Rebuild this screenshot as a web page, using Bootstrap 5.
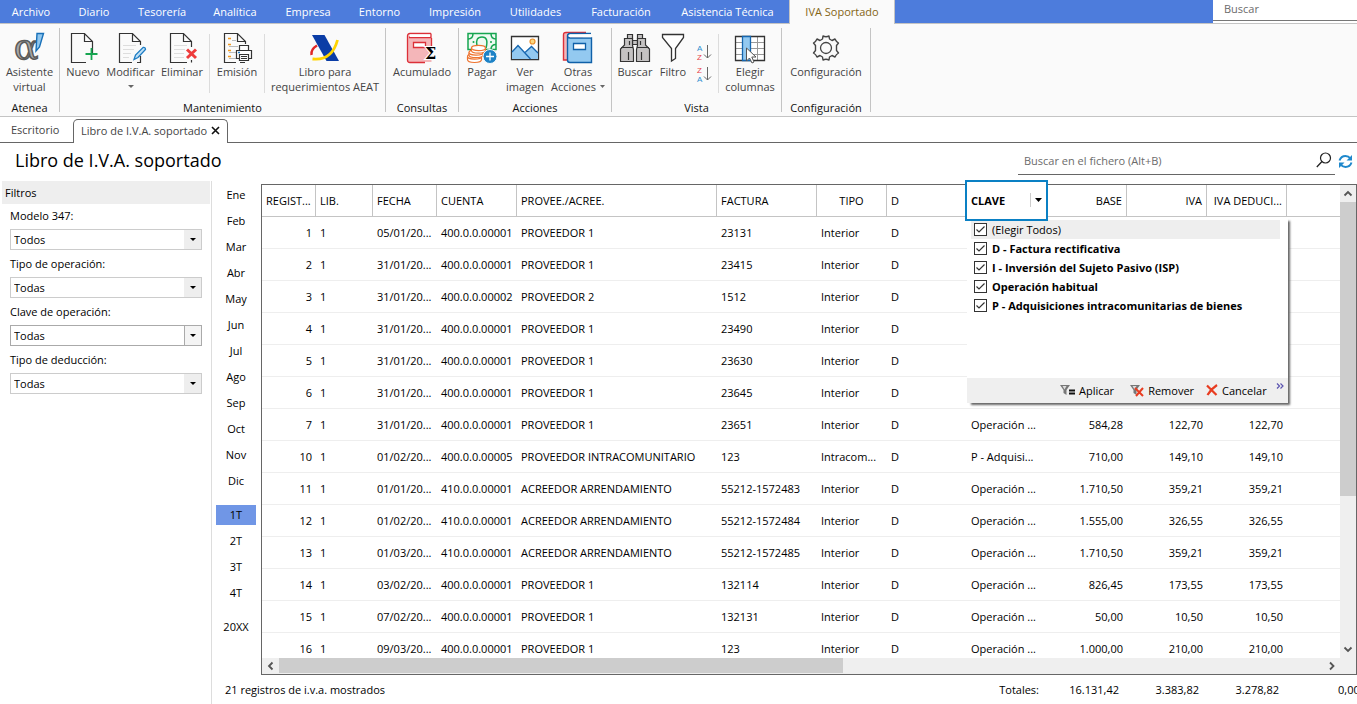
<!DOCTYPE html>
<html lang="es">
<head>
<meta charset="utf-8">
<meta name="viewport" content="width=device-width, initial-scale=1">
<title>Libro de I.V.A. soportado</title>
<link href="https://cdn.jsdelivr.net/npm/bootstrap@5.3.0/dist/css/bootstrap.min.css" rel="stylesheet">
<style>
body { font-family: "Open Sans", "Noto Sans", sans-serif; font-size: 11px; line-height: 15px; color: #000; background: #fff; }
button, input, select { font: inherit; color: inherit; }
svg { display: block; flex: none; }
.plain { background: none; border: 0; padding: 0; }
.fit { min-width: 0; min-height: 0; }
/* top menu */
.topbar { background: #4d7cdc; height: 24px; border-bottom: 1px solid #c4c4c4; }
.menu { display: grid; grid-template-columns: 62px 64px 72px 74px 72px 71px 80px 81px 90px 123px 106px; }
.menu a { color: #fff; text-decoration: none; text-align: center; line-height: 24px; height: 24px; white-space: nowrap; }
.menu a.current { background: #fafafa; color: #846514; border: 1px solid #c4c4c4; border-width: 0 1px; }
.appsearch { width: 144px; height: 21px; border: 0; border-bottom: 1px solid #777; outline: 0; padding: 0 11px 3px; }
.searchslot { background: #fff; height: 23px; }
.appsearch::placeholder, .filesearch input::placeholder { color: #6b6b6b; opacity: 1; }
/* ribbon */
.ribbon { background: #fafafa; height: 93px; border-bottom: 1px solid #c4c4c4; padding-top: 4px; color: #444; }
.rgroup { height: 84px; border-right: 1px solid #c4c4c4; }
.rgroup > h2 { font-size: 11px; line-height: 15px; margin: 0; text-align: center; color: #111; font-weight: 400; }
.rtools { height: 72px; }
.rbtn { display: flex; flex-direction: column; align-items: center; padding-top: 3px; white-space: nowrap; }
.rbtn svg.ico { width: 34px; height: 34px; margin-bottom: -1px; overflow: visible; }
.rsep { width: 1px; height: 59px; margin-top: 6px; background: #dcdcdc; }
.w30 { width: 30px; } .w40 { width: 40px; } .w46 { width: 46px; } .w49 { width: 49px; }
.w54 { width: 54px; } .w59 { width: 59px; } .w62 { width: 62px; } .w66 { width: 66px; } .w72 { width: 72px; }
.w88 { width: 88px; } .w120 { width: 120px; }
.sorter { overflow: visible; font-family: "Liberation Sans", sans-serif; font-size: 8px; }
/* document tabs */
.doctabs { height: 26px; border-bottom: 1px solid #666; color: #444; }
.doctabs a { color: inherit; text-decoration: none; }
.doctabs .closed { width: 73px; padding-left: 11px; }
.doctabs .opened { height: 24px; width: 155px; margin-top: 2px; padding: 0 0 3px 7px; background: #fff; border: 1px solid #666; border-bottom: 0; border-radius: 5px 5px 0 0; white-space: nowrap; }
.pagehead { height: 38px; }
.pagehead h1 { font-size: 18px; line-height: 24px; margin: 0; padding: 5px 0 0 15px; font-weight: 400; }
.filesearch { width: 317px; height: 25px; border-bottom: 1px solid #666; margin: 7px 3px 0 0; padding: 0 3px 4px 6px; }
.filesearch input { border: 0; outline: 0; padding: 0; background: none; }
/* filters */
.side { width: 212px; border-right: 1px solid #ddd; }
.side h2 { font-size: 11px; line-height: 23px; font-weight: 400; background: #eee; margin: 0 1px 4px 2px; padding-left: 3px; }
.field { margin: 0 9px 4px 10px; height: 44px; }
.field label { display: block; line-height: 15px; margin-bottom: 6px; }
.field select { display: block; width: 192px; height: 21px; border: 1px solid #ccc; border-radius: 0; padding: 0 3px; -webkit-appearance: none; appearance: none; background: #fff url("data:image/svg+xml,%3Csvg xmlns='http://www.w3.org/2000/svg' width='17' height='19'%3E%3Cpath fill='%23eee' d='M0 0h17v19H0z'/%3E%3Cpath d='M6 8h6L9 11z'/%3E%3C/svg%3E") no-repeat right center; }
.field select.hot { border-color: #aaa; background-image: url("data:image/svg+xml,%3Csvg xmlns='http://www.w3.org/2000/svg' width='17' height='19'%3E%3Cpath fill='%23f4f4f4' d='M0 0h17v19H0z'/%3E%3Cpath fill='%23aaa' d='M0 0h1v19H0z'/%3E%3Cpath d='M6 8h6L9 11z'/%3E%3C/svg%3E"); }
.periods { width: 49px; padding: 4px 5px 0 4px; gap: 6px; }
.periods button { height: 20px; width: 40px; text-align: center; padding-bottom: 1px; }
.periods .chosen { background: #7096e6; }
/* records grid */
.gridslot { padding-top: 3px; }
.frame { border: 1px solid #666; }
.records { table-layout: fixed; width: 100%; border-collapse: separate; border-spacing: 0; }
.records th, .records td { height: 32px; padding: 0 4px 1px; border-bottom: 1px solid #eee; white-space: nowrap; overflow: hidden; vertical-align: middle; }
.records th { font-weight: 400; border-bottom-color: #c4c4c4; border-right: 1px solid #c4c4c4; }
.records th:last-child { border-right: 0; }
.num { text-align: right; }
.bar { background: #efefef; }
.vbar { width: 16px; } .hbar { height: 16px; }
.thumb { background: #cdcdcd; }
.vbar .thumb { height: 67%; } .hbar .thumb { width: 54%; height: 15px; }
.clavebox { position: absolute; left: 704px; top: -4px; width: 83px; height: 41px; border: 2px solid #0a80c4; background: #fff; padding: 0 4px 1px; z-index: 3; font-weight: 700; }
.clavebox i { width: 1px; height: 14px; background: #ccc; margin-right: 4px; }
.pop { position: absolute; left: 706px; top: 33px; width: 321px; height: 186px; background: #fff; box-shadow: 3px 3px 2px -1px #666; z-index: 2; padding-top: 3px; }
.pop label { display: flex; align-items: center; height: 19px; margin: 0 8px 0 4px; padding-left: 3px; gap: 5px; font-weight: 700; white-space: nowrap; }
.pop label:first-child { background: #eee; font-weight: 400; }
.pop input { -webkit-appearance: none; appearance: none; width: 13px; height: 13px; margin: 0; border: 1px solid #333; background: #fff; }
.pop input:checked { background: #fff url("data:image/svg+xml,%3Csvg xmlns='http://www.w3.org/2000/svg' width='11' height='11'%3E%3Cpath fill='none' stroke='%23333' stroke-width='1.200' d='M1.500 5.500L4 8l5.500-5.500'/%3E%3C/svg%3E") center no-repeat; }
.popfoot { background: #efefef; height: 25px; padding: 0 4px 1px 93px; }
.popfoot button { white-space: nowrap; }
.totals { height: 29px; padding-left: 13px; }
.totals div { text-align: right; width: 80px; white-space: nowrap; }
.totals .last { text-align: left; width: 78px; padding-left: 59px; }
</style>
</head>
<body class="vh-100 overflow-hidden d-flex flex-column">

<header class="topbar d-flex justify-content-between flex-shrink-0">
  <nav class="menu">
    <a href="#">Archivo</a><a href="#">Diario</a><a href="#">Tesorería</a><a href="#">Analítica</a><a href="#">Empresa</a><a href="#">Entorno</a><a href="#">Impresión</a><a href="#">Utilidades</a><a href="#">Facturación</a><a href="#">Asistencia Técnica</a><a href="#" class="current">IVA Soportado</a>
  </nav>
  <div class="searchslot"><input class="appsearch d-block" type="text" placeholder="Buscar" aria-label="Buscar"></div>
</header>

<section class="ribbon d-flex flex-shrink-0">
  <div class="rgroup">
    <div class="rtools d-flex">
      <button class="plain rbtn w59">
        <svg class="ico" viewBox="0 0 34 34"><text x="1" y="28" font-family="DejaVu Serif" font-size="36" fill="#a8a8a8" stroke="#5a5a5a" stroke-width="1.500">α</text><path d="M24 2.500h6.500l-4 13.500-3.500 4z" fill="#8fc6ee" stroke="#1870b8" stroke-width="1.400"/></svg>
        <span>Asistente</span><span>virtual</span></button>
    </div>
    <h2>Atenea</h2>
  </div>
  <div class="rgroup">
    <div class="rtools d-flex">
      <button class="plain rbtn w46">
        <svg class="ico" viewBox="0 0 34 34"><path d="M20 31.500H5.500V2.500h13l8 8V22M18.500 2.500v8h8" fill="none" stroke="#333" stroke-width="1.200"/><path d="M25.500 17v12M19.500 23h12" stroke="#16a550" stroke-width="1.800"/></svg>
        <span>Nuevo</span></button>
      <button class="plain rbtn w49">
        <svg class="ico" viewBox="0 0 34 34"><path d="M18 31.500H5.500V2.500h13l8 8V14M18.500 2.500v8h8M26.500 25v6.500H23" fill="none" stroke="#333" stroke-width="1.200"/><path d="M9 14.500h13M9 18.500h11M9 22.500h8M9 26.500h6" stroke="#ddd"/><path d="M20 28.500l1.500-4.500L29 16.500q2.500-.5 2.500 2L24 26.500z" fill="#bfe0f6" stroke="#1d7cc4" stroke-width="1.300"/></svg>
        <span>Modificar</span><svg width="6" height="15"><path d="M0 6h6L3 9z" fill="#666"/></svg></button>
      <button class="plain rbtn w54">
        <svg class="ico" viewBox="0 0 34 34"><path d="M22 31.500H5.500V2.500h13l8 8V16M18.500 2.500v8h8M26.500 29v2.500" fill="none" stroke="#333" stroke-width="1.200"/><path d="M9 14.500h13M9 18.500h11M9 22.500h10M9 26.500h10" stroke="#ddd"/><path d="M22 18.500l9 8.500M31 18.500L22 27" stroke="#ee3b3b" stroke-width="3"/></svg>
        <span>Eliminar</span></button>
      <div class="rsep"></div>
      <button class="plain rbtn w54">
        <svg class="ico" viewBox="0 0 34 34"><path d="M16 31.500H4.500V2.500h13l8 8V13M17.500 2.500v8h8M20 31.500h5" fill="none" stroke="#333" stroke-width="1.200"/><path d="M8 7.500h3M8 13.500h3M8 19.500h3M8 25.500h3" stroke="#f39a1e" stroke-width="1.300"/><path d="M12 9.500h4M9 15.500h9M9 21.500h7M9 27.500h7" stroke="#bbb"/><path d="M19.500 19.500v-5h9v5M20 27.500h-3.500v-8h15v8H29M19.500 23.500h9v6h-9zM21 25.500h6M21 27.500h6" fill="#fff" stroke="#333" stroke-width="1.200"/><path d="M18 21.500h2" stroke="#1d7cc4" stroke-width="1.500"/></svg>
        <span>Emisión</span></button>
      <div class="rsep"></div>
      <button class="plain rbtn w120">
        <svg class="ico" viewBox="0 0 34 34"><path d="M4 4h12.500L31 30H18.500z" fill="#0b3da6"/><path d="M9 14.500q-6.500 4-5.500 9.500" fill="none" stroke="#e02828" stroke-width="2.500"/><path d="M4.500 28Q24 30 29.500 9" fill="none" stroke="#ffd400" stroke-width="2.800"/></svg>
        <span>Libro para</span><span>requerimientos AEAT</span></button>
    </div>
    <h2>Mantenimiento</h2>
  </div>
  <div class="rgroup">
    <div class="rtools d-flex">
      <button class="plain rbtn w72">
        <svg class="ico" viewBox="0 0 34 34"><path d="M2.500 4.500v24q0 2.500 2.500 2.500h21.500V7z" fill="#f4b6b9"/><path d="M26 2.500H5q-2.500 0-2.500 2.500v24q0 2.500 2.500 2.500h15M26 2.500V6.500H4M26.500 7v8" fill="none" stroke="#dc3038" stroke-width="1.300"/><path d="M5 3.500h20v2.500H5z" fill="#fff"/><path d="M8.500 11.500h12v5h-12z" fill="#fff" stroke="#dc3038" stroke-width="1.300"/><text x="20" y="28" font-family="DejaVu Serif" font-weight="700" font-size="16" stroke="#fff" stroke-width="2" paint-order="stroke">Σ</text></svg>
        <span>Acumulado</span></button>
    </div>
    <h2>Consultas</h2>
  </div>
  <div class="rgroup">
    <div class="rtools d-flex">
      <button class="plain rbtn w46">
        <svg class="ico" viewBox="0 0 34 34"><path d="M3 2.500h28v16H3z" fill="#eefaf2" stroke="#16a550" stroke-width="1.500"/><path d="M3 8q5 0 5-5.500M26 2.500Q26 8 31 8M26 18.500q0-5 5-5M12 15q-2-9 5-9t4 11" fill="none" stroke="#16a550" stroke-width="1.500"/><circle cx="8.500" cy="11" r="1" fill="#16a550"/><circle cx="26" cy="11" r="1" fill="#16a550"/><g fill="#fff" stroke="#ee7430" stroke-width="1.200"><path d="M2.500 26v2.500c0 4 14 4 14 0V26"/><ellipse cx="9.500" cy="25.500" rx="7" ry="2.600"/><path d="M4 21.500V24c0 3.500 14 3.500 14 0v-2.500"/><ellipse cx="11" cy="21.500" rx="7" ry="2.600"/><path d="M6.500 17v2.500c0 3.500 14 3.500 14 0V17"/><ellipse cx="13.500" cy="17" rx="7" ry="2.600"/></g><circle cx="25" cy="25.500" r="7" fill="#1d82c6" stroke="#fafafa"/><path d="M25 21.500v8M21 25.500h8" stroke="#fff" stroke-width="1.300"/></svg>
        <span>Pagar</span></button>
      <button class="plain rbtn w40">
        <svg class="ico" viewBox="0 0 34 34"><path d="M3.500 5.500h27v23h-27z" fill="#fff" stroke="#333" stroke-width="1.300"/><path d="M4 21l6-6.500 7 7.500 6.500-6.500L30 22v6H4z" fill="#93c9f0"/><path d="M4 21l6-6.500 12.500 13.500M17 21.500l6.500-6 6.500 6.500" fill="none" stroke="#1667b0" stroke-width="1.300"/><circle cx="24.500" cy="10.500" r="2.500" fill="#fbd77e" stroke="#ea8f2b" stroke-width="1.200"/></svg>
        <span>Ver</span><span>imagen</span></button>
      <button class="plain rbtn w66">
        <svg class="ico" viewBox="0 0 34 34"><path d="M25 1.500H5Q2.500 1.500 2.500 4v25h5" fill="#f4b6b9" stroke="#dc3038" stroke-width="1.400"/><path d="M6 2.500h19V6H6z" fill="#fff"/><path d="M30 2.500H9Q6.500 2.500 6.500 5v24q0 2.500 2.500 2.500h21.500V7H9q-2 0-2.500-2" fill="#93c9f0" stroke="#0f60a8" stroke-width="1.400"/><path d="M9 3.200h21V6.300H9q-3-1.500 0-3.100" fill="#fff"/><path d="M12.500 12.500h12v6h-12z" fill="#fff" stroke="#0f60a8" stroke-width="1.300"/></svg>
        <span>Otras</span><span class="d-flex align-items-center gap-1">Acciones <svg width="5" height="4"><path d="M0 0h5L2.500 3z" fill="#666"/></svg></span></button>
    </div>
    <h2>Acciones</h2>
  </div>
  <div class="rgroup">
    <div class="rtools d-flex">
      <button class="plain rbtn w46">
        <svg class="ico" viewBox="0 0 34 34"><g fill="#c4c2c2" stroke="#333" stroke-width="1.200"><path d="M9.500 3.500h5V8h-5zM19.500 3.500h5V8h-5z"/><path d="M14.500 9.500h5v4h-5z"/><path d="M6.500 7.500h8v7l1 4v12H2.500V18l4-4zM27.500 7.500h-8v7l-1 4v12h13V18l-4-4z"/><path d="M3 16.500h12M19 16.500h12M10.500 21v8M23.500 21v8M11.500 10v4M22.500 10v4" fill="none"/></g></svg>
        <span>Buscar</span></button>
      <button class="plain rbtn w30">
        <svg class="ico" viewBox="0 0 34 34"><path d="M6.500 3.500h21v3l-8 11v10l-4 2.500V17.500l-9-11z" fill="#fff" stroke="#333" stroke-width="1.300"/></svg>
        <span>Filtro</span></button>
      <div class="w30 d-flex flex-column align-items-center pt-3">
        <button class="plain mb-1" aria-label="Orden ascendente"><svg class="sorter" width="15" height="18"><text x="1" y="7" fill="#2f8fd0">A</text><text x="1" y="16" fill="#e8434a">Z</text><path d="M11.500 1v13M8 10.500l3.500 3.500 3.500-3.500" fill="none" stroke="#666"/></svg></button>
        <button class="plain" aria-label="Orden descendente"><svg class="sorter" width="15" height="18"><text x="1" y="7" fill="#e8434a">Z</text><text x="1" y="16" fill="#2f8fd0">A</text><path d="M11.500 1v13M8 10.500l3.500 3.500 3.500-3.500" fill="none" stroke="#666"/></svg></button>
      </div>
      <div class="rsep"></div>
      <button class="plain rbtn w62">
        <svg class="ico" viewBox="0 0 34 34"><path d="M2.500 5.500h29v24h-29z" fill="#fff"/><path d="M3 11.500h28M3 17.500h28M3 23.500h28M24.500 6v23" stroke="#999"/><path d="M2.500 5.500h29v24h-29z" fill="none" stroke="#333" stroke-width="1.300"/><path d="M9.500 5.500h8v24h-8z" fill="#93c9f0" stroke="#1667b0" stroke-width="1.300"/><path d="M13.500 17v13l3-3 2.500 5 2-1-2.200-5h4.200z" fill="#fff" stroke="#555"/></svg>
        <span>Elegir</span><span>columnas</span></button>
    </div>
    <h2>Vista</h2>
  </div>
  <div class="rgroup">
    <div class="rtools d-flex">
      <button class="plain rbtn w88">
        <svg class="ico" viewBox="0 0 34 34"><path d="M13.500 8l.5-3q3 1.500 6 0l.5 3 2.500 1.500 3-1.500q1 2.500 3.500 4l-2 2.500v5l2 2.500q-2.500 1.500-3.500 4l-3-1.500-2.500 1.500-.5 3q-3-1.500-6 0l-.5-3-2.500-1.500-3 1.500q-1-2.500-3.500-4l2-2.500v-5l-2-2.500Q7 10.500 8 8l3 1.500z" fill="none" stroke="#444" stroke-width="1.400" stroke-linejoin="round"/><circle cx="17" cy="17" r="5.500" fill="none" stroke="#444" stroke-width="1.300"/></svg>
        <span>Configuración</span></button>
    </div>
    <h2>Configuración</h2>
  </div>
</section>

<nav class="doctabs d-flex flex-shrink-0">
  <a href="#" class="closed d-flex align-items-center">Escritorio</a>
  <div class="opened d-flex align-items-center"><a href="#" class="pe-1">Libro de I.V.A. soportado</a><button class="plain" aria-label="Cerrar"><svg width="9" height="9"><path d="M1 1l7 7M8 1L1 8" stroke="#111" stroke-width="1.600"/></svg></button></div>
</nav>

<div class="pagehead d-flex justify-content-between flex-shrink-0">
  <h1>Libro de I.V.A. soportado</h1>
  <div class="d-flex">
    <div class="filesearch d-flex align-items-center">
      <input class="flex-grow-1" type="text" placeholder="Buscar en el fichero (Alt+B)" aria-label="Buscar en el fichero">
      <button class="plain" aria-label="Buscar"><svg width="16" height="16"><circle cx="9.500" cy="6" r="5" fill="none" stroke="#222" stroke-width="1.200"/><path d="M6 9.500L.8 15" stroke="#222" stroke-width="1.300"/></svg></button>
    </div>
    <button class="plain align-self-start mt-2 pt-1 me-1" aria-label="Actualizar"><svg width="15" height="13" viewBox="0 1 15 13"><path d="M1.500 6.500Q3 2 7.500 2q3 0 5 2.500M13.500 8.500Q12 13 7.500 13q-3 0-5-2.500" fill="none" stroke="#1f88cc" stroke-width="2"/><path d="M14 1v5.500H8.500zM1 14V8.500h5.500z" fill="#1f88cc"/></svg></button>
  </div>
</div>

<main class="d-flex flex-grow-1 fit">
  <aside class="side flex-shrink-0">
    <h2>Filtros</h2>
    <div class="field"><label for="f1">Modelo 347:</label><select id="f1"><option>Todos</option></select></div>
    <div class="field"><label for="f2">Tipo de operación:</label><select id="f2"><option>Todas</option></select></div>
    <div class="field"><label for="f3">Clave de operación:</label><select id="f3" class="hot"><option>Todas</option></select></div>
    <div class="field"><label for="f4">Tipo de deducción:</label><select id="f4"><option>Todas</option></select></div>
  </aside>
  <div class="flex-grow-1 d-flex flex-column fit">
    <div class="d-flex flex-grow-1 fit">
      <div class="periods d-flex flex-column flex-shrink-0">
        <button class="plain">Ene</button><button class="plain">Feb</button><button class="plain">Mar</button><button class="plain">Abr</button><button class="plain">May</button><button class="plain">Jun</button><button class="plain">Jul</button><button class="plain">Ago</button><button class="plain">Sep</button><button class="plain">Oct</button><button class="plain">Nov</button><button class="plain">Dic</button>
        <button class="plain chosen mt-2">1T</button><button class="plain">2T</button><button class="plain">3T</button><button class="plain">4T</button>
        <button class="plain mt-2">20XX</button>
      </div>
      <div class="gridslot flex-grow-1 d-flex flex-column fit">
        <div class="position-relative flex-grow-1 fit">
          <div class="frame h-100 d-flex flex-column">
            <div class="d-flex flex-grow-1 overflow-hidden">
              <div class="flex-grow-1 overflow-hidden">
                <table class="records">
                  <colgroup><col style="width:54px"><col style="width:57px"><col style="width:64px"><col style="width:80px"><col style="width:200px"><col style="width:100px"><col style="width:70px"><col style="width:80px"><col style="width:80px"><col style="width:80px"><col style="width:80px"><col style="width:80px"><col></colgroup>
                  <thead><tr><th>REGIST...</th><th>LIB.</th><th>FECHA</th><th>CUENTA</th><th>PROVEE./ACREE.</th><th>FACTURA</th><th class="text-center">TIPO</th><th>D</th><th></th><th class="num">BASE</th><th class="num">IVA</th><th class="num">IVA DEDUCI...</th><th></th></tr></thead>
                  <tbody>
                  <tr><td class="num">1</td><td>1</td><td>05/01/20...</td><td>400.0.0.00001</td><td>PROVEEDOR 1</td><td>23131</td><td>Interior</td><td>D</td><td></td><td></td><td></td><td></td><td></td></tr>
                  <tr><td class="num">2</td><td>1</td><td>31/01/20...</td><td>400.0.0.00001</td><td>PROVEEDOR 1</td><td>23415</td><td>Interior</td><td>D</td><td></td><td></td><td></td><td></td><td></td></tr>
                  <tr><td class="num">3</td><td>1</td><td>31/01/20...</td><td>400.0.0.00002</td><td>PROVEEDOR 2</td><td>1512</td><td>Interior</td><td>D</td><td></td><td></td><td></td><td></td><td></td></tr>
                  <tr><td class="num">4</td><td>1</td><td>31/01/20...</td><td>400.0.0.00001</td><td>PROVEEDOR 1</td><td>23490</td><td>Interior</td><td>D</td><td></td><td></td><td></td><td></td><td></td></tr>
                  <tr><td class="num">5</td><td>1</td><td>31/01/20...</td><td>400.0.0.00001</td><td>PROVEEDOR 1</td><td>23630</td><td>Interior</td><td>D</td><td></td><td></td><td></td><td></td><td></td></tr>
                  <tr><td class="num">6</td><td>1</td><td>31/01/20...</td><td>400.0.0.00001</td><td>PROVEEDOR 1</td><td>23645</td><td>Interior</td><td>D</td><td></td><td></td><td></td><td></td><td></td></tr>
                  <tr><td class="num">7</td><td>1</td><td>31/01/20...</td><td>400.0.0.00001</td><td>PROVEEDOR 1</td><td>23651</td><td>Interior</td><td>D</td><td>Operación ...</td><td class="num">584,28</td><td class="num">122,70</td><td class="num">122,70</td><td></td></tr>
                  <tr><td class="num">10</td><td>1</td><td>01/02/20...</td><td>400.0.0.00005</td><td>PROVEEDOR INTRACOMUNITARIO</td><td>123</td><td>Intracom...</td><td>D</td><td>P - Adquisi...</td><td class="num">710,00</td><td class="num">149,10</td><td class="num">149,10</td><td></td></tr>
                  <tr><td class="num">11</td><td>1</td><td>01/01/20...</td><td>410.0.0.00001</td><td>ACREEDOR ARRENDAMIENTO</td><td>55212-1572483</td><td>Interior</td><td>D</td><td>Operación ...</td><td class="num">1.710,50</td><td class="num">359,21</td><td class="num">359,21</td><td></td></tr>
                  <tr><td class="num">12</td><td>1</td><td>01/02/20...</td><td>410.0.0.00001</td><td>ACREEDOR ARRENDAMIENTO</td><td>55212-1572484</td><td>Interior</td><td>D</td><td>Operación ...</td><td class="num">1.555,00</td><td class="num">326,55</td><td class="num">326,55</td><td></td></tr>
                  <tr><td class="num">13</td><td>1</td><td>01/03/20...</td><td>410.0.0.00001</td><td>ACREEDOR ARRENDAMIENTO</td><td>55212-1572485</td><td>Interior</td><td>D</td><td>Operación ...</td><td class="num">1.710,50</td><td class="num">359,21</td><td class="num">359,21</td><td></td></tr>
                  <tr><td class="num">14</td><td>1</td><td>03/02/20...</td><td>400.0.0.00001</td><td>PROVEEDOR 1</td><td>132114</td><td>Interior</td><td>D</td><td>Operación ...</td><td class="num">826,45</td><td class="num">173,55</td><td class="num">173,55</td><td></td></tr>
                  <tr><td class="num">15</td><td>1</td><td>07/02/20...</td><td>400.0.0.00001</td><td>PROVEEDOR 1</td><td>132131</td><td>Interior</td><td>D</td><td>Operación ...</td><td class="num">50,00</td><td class="num">10,50</td><td class="num">10,50</td><td></td></tr>
                  <tr><td class="num">16</td><td>1</td><td>09/03/20...</td><td>400.0.0.00001</td><td>PROVEEDOR 1</td><td>123</td><td>Interior</td><td>D</td><td>Operación ...</td><td class="num">1.000,00</td><td class="num">210,00</td><td class="num">210,00</td><td></td></tr>
                  </tbody>
                </table>
              </div>
              <div class="bar vbar d-flex flex-column flex-shrink-0">
                <svg width="16" height="17"><path d="M4.500 10.500L8 7l3.500 3.500" fill="none" stroke="#555" stroke-width="1.800"/></svg>
                <div class="flex-grow-1"><div class="thumb"></div></div>
                <svg width="16" height="17"><path d="M4.500 6.500L8 10l3.500-3.500" fill="none" stroke="#555" stroke-width="1.800"/></svg>
              </div>
            </div>
            <div class="bar hbar d-flex flex-shrink-0">
              <svg width="17" height="16"><path d="M10.500 4.500L7 8l3.500 3.500" fill="none" stroke="#555" stroke-width="1.800"/></svg>
              <div class="flex-grow-1"><div class="thumb"></div></div>
              <svg width="17" height="16" class="me-3"><path d="M7 4.500L10.500 8 7 11.500" fill="none" stroke="#555" stroke-width="1.800"/></svg>
            </div>
          </div>
          <button class="clavebox d-flex align-items-center"><span class="me-auto">CLAVE</span><i></i><svg width="7" height="4"><path d="M0 0h7L3.500 4z"/></svg></button>
          <div class="pop d-flex flex-column">
            <label><input type="checkbox" checked>(Elegir Todos)</label>
            <label><input type="checkbox" checked>D - Factura rectificativa</label>
            <label><input type="checkbox" checked>I - Inversión del Sujeto Pasivo (ISP)</label>
            <label><input type="checkbox" checked>Operación habitual</label>
            <label><input type="checkbox" checked>P - Adquisiciones intracomunitarias de bienes</label>
            <div class="popfoot d-flex align-items-center mt-auto">
              <button class="plain d-flex align-items-center gap-1 me-3"><svg width="15" height="12"><path d="M0 1h10L6.500 6v5l-3-2V6z" fill="#777"/><path d="M2.500 2h4l-2 3.500z" fill="#ddd"/><path d="M9 6.500h6M9 9.500h6" stroke="#111" stroke-width="1.800"/></svg>Aplicar</button>
              <button class="plain d-flex align-items-center gap-1 me-2 pe-1"><svg width="14" height="13"><path d="M0 1h10L6.500 6v5l-3-2V6z" fill="#777"/><path d="M2.500 2h4l-2 3.500z" fill="#ddd"/><path d="M5 4l8 8M13 4l-7 8" stroke="#e83c20" stroke-width="2"/></svg>Remover</button>
              <button class="plain d-flex align-items-center gap-1"><svg width="12" height="12"><path d="M1 1.500l9.500 9.500M11 1Q5 5 1.500 11" fill="none" stroke="#e83c20" stroke-width="2.200"/></svg>Cancelar</button>
              <svg class="ms-auto mb-2" width="8" height="6"><path d="M1 .5L3.500 3 1 5.500M4.500.5L7 3 4.500 5.500" fill="none" stroke="#5c54b0" stroke-width="1.200"/></svg>
            </div>
          </div>
        </div>
      </div>
    </div>
    <footer class="totals d-flex align-items-center flex-shrink-0">
      <span class="me-auto">21 registros de i.v.a. mostrados</span>
      <div>Totales:</div><div>16.131,42</div><div>3.383,82</div><div>3.278,82</div><div class="last">0,00</div>
    </footer>
  </div>
</main>
<script src="https://cdn.jsdelivr.net/npm/bootstrap@5.3.0/dist/js/bootstrap.bundle.min.js"></script>
</body>
</html>
